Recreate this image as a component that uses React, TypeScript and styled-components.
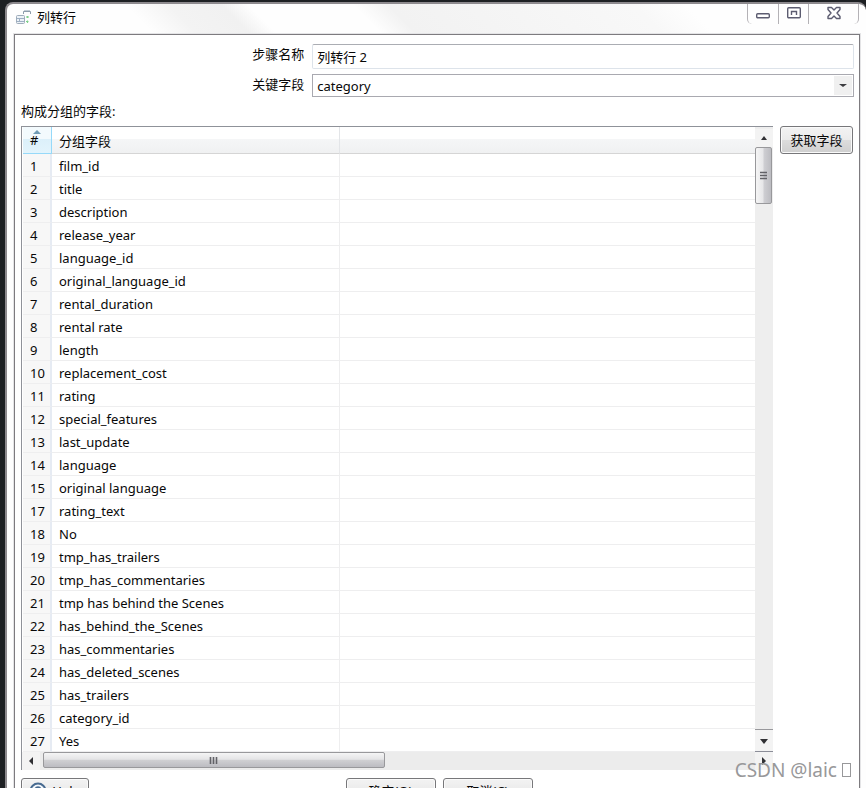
import React from "react";
import styled, { createGlobalStyle } from "styled-components";

const GlobalStyle = createGlobalStyle`
  * { box-sizing: border-box; }
  html, body, #root { height: 100%; }
  body {
    margin: 0;
    overflow: hidden;
    background: #1d2023;
    color: #080808;
    font: 13px/18px "Noto Sans", "Noto Sans CJK SC", sans-serif;
  }
  button, input, select { font: inherit; color: inherit; margin: 0; }
`;

const Desktop = styled.div`
  position: relative;
  height: 100%;
  padding: 2px 0 0 5px;
  overflow: hidden;
`;

const WindowFrame = styled.section`
  height: 100%;
  min-height: 0;
  display: flex;
  flex-direction: column;
  padding: 0 6px 0 7px;
  overflow: hidden;
  border: 2px solid #8d8a8e;
  border-right: 0;
  border-bottom: 0;
  border-radius: 8px 8px 0 0;
  background: #fefefe;
`;

const TitleBar = styled.header`
  flex: none;
  height: 30px;
  display: flex;
  align-items: flex-start;
  justify-content: space-between;
  background: linear-gradient(
    45deg,
    #fefefe 16%,
    #f3f3f3 21%,
    #f1f1f1 27%,
    #fefefe 30%,
    #fefefe 42%,
    #f2f2f2 46%,
    #f8f8f8 74%,
    #fefefe 80%
  );
`;

const Title = styled.h1`
  display: flex;
  align-items: center;
  gap: 5px;
  margin: 4px 0 0 2px;
  font-size: 13px;
  font-weight: 400;
  line-height: 18px;
`;

const WindowControls = styled.div`
  display: flex;
  height: 20px;
  margin-right: 1px;
  border: 1px solid #b4b2b6;
  border-top: 0;
  border-bottom: 0;
  border-radius: 0 0 5px 5px;
`;

const WindowButton = styled.button<{ $wide?: boolean }>`
  width: ${(p) => (p.$wide ? 50 : 30)}px;
  padding: 0;
  display: flex;
  justify-content: center;
  align-items: flex-start;
  border: 0;
  background: transparent;
  & + & { border-left: 1px solid #b4b2b6; }
`;

const Content = styled.main`
  flex: 1 0 auto;
  padding: 9px 5px 10px 6px;
  border: 1px solid #7d7b7f;
  outline: 1px solid #e4e4e6;
  background: #fff;
`;

const Form = styled.div`
  display: grid;
  grid-template-columns: 34% 1fr;
  column-gap: 8px;
  row-gap: 5px;
`;

const FieldLabel = styled.label`
  text-align: right;
  line-height: 20px;
`;

const TextField = styled.input`
  width: 100%;
  height: 25px;
  padding: 0 4px;
  border: 1px solid #dde3ea;
  border-top-color: #abadb3;
  border-radius: 2px;
  background: #fff;
`;

const SelectWrap = styled.div`
  position: relative;
`;

const SelectField = styled.select`
  display: block;
  width: 100%;
  height: 23px;
  padding: 0 22px 0 4px;
  appearance: none;
  border: 1px solid #a9a9b0;
  border-radius: 0;
  background: #fff;
`;

const SelectArrow = styled.span`
  position: absolute;
  top: 2px;
  right: 2px;
  bottom: 2px;
  width: 18px;
  display: flex;
  align-items: center;
  justify-content: center;
  background: #f0f0f0;
  pointer-events: none;
`;

const SectionLabel = styled.p`
  margin: 4px 0 5px;
  line-height: 20px;
`;

const GroupArea = styled.div`
  display: flex;
  align-items: flex-start;
  gap: 7px;
  padding-right: 1px;
`;

const ListBox = styled.div`
  flex: 1;
  min-width: 0;
  border-left: 1px solid #8f9299;
  border-top: 1px solid #8f9299;
`;

const ListBody = styled.div`
  display: flex;
`;

const FieldTable = styled.table`
  flex: 1;
  min-width: 0;
  margin-left: 1px;
  border-collapse: separate;
  border-spacing: 0;
  table-layout: fixed;
`;

const NumberColumn = styled.col`
  width: 29px;
`;

const NameColumn = styled.col`
  width: 288px;
`;

const HeadCell = styled.th<{ $sorted?: boolean }>`
  position: relative;
  height: 27px;
  padding: ${(p) => (p.$sorted ? "0 0 0 7px" : "1px 0 0 7px")};
  text-align: left;
  font-weight: 400;
  border-right: 1px solid ${(p) => (p.$sorted ? "#96d9f9" : "#e3e5e8")};
  border-bottom: 1px solid ${(p) => (p.$sorted ? "#96d9f9" : "#d5d5d5")};
  background: ${(p) =>
    p.$sorted
      ? "linear-gradient(#f3fafd 45%, #dcf0fa 46%, #e3f4fc)"
      : "linear-gradient(#ffffff 45%, #f5f6f7 46%, #f0f1f2)"};
  &:last-child { border-right: 0; }
`;

const SortMark = styled.svg`
  position: absolute;
  top: 3px;
  left: 10px;
`;

const NumberCell = styled.td`
  height: 23px;
  padding: 1px 0 0 7px;
  line-height: 20px;
  border-right: 2px solid #e6ebf3;
  border-bottom: 1px solid #eeeeef;
  background: #f7f7f7;
`;

const Cell = styled.td`
  height: 23px;
  padding: 1px 0 0 7px;
  line-height: 20px;
  white-space: nowrap;
  border-right: 1px solid #eeeeef;
  border-bottom: 1px solid #eeeeef;
  &:last-child { border-right: 0; }
`;

const VerticalBar = styled.div`
  width: 18px;
  padding: 2px 0 0;
  display: flex;
  flex-direction: column;
  border-bottom: 1px solid #8b8d98;
  background: #eeeeee;
`;

const HorizontalBar = styled.div`
  height: 18px;
  display: flex;
  background: #ececec;
`;

const ArrowButton = styled.button<{ $ruled?: boolean }>`
  flex: none;
  width: 18px;
  height: ${(p) => (p.$ruled ? 22 : 18)}px;
  padding: 0;
  display: flex;
  align-items: center;
  justify-content: center;
  border: 0;
  border-top: ${(p) => (p.$ruled ? "1px solid #98989c" : "0")};
  background: #f3f3f3;
`;

const Track = styled.div<{ $vertical?: boolean }>`
  flex: 1;
  display: flex;
  flex-direction: ${(p) => (p.$vertical ? "column" : "row")};
  padding-left: ${(p) => (p.$vertical ? 0 : 3)}px;
`;

const Thumb = styled.div<{ $vertical?: boolean }>`
  width: ${(p) => (p.$vertical ? "17px" : "48%")};
  height: ${(p) => (p.$vertical ? "57px" : "16px")};
  display: flex;
  align-items: center;
  justify-content: center;
  border: 1px solid #98989b;
  border-radius: 2px;
  background: ${(p) =>
    p.$vertical
      ? "linear-gradient(90deg, #f5f5f5, #e6e6e8 48%, #cfcfd3 52%, #bcbcc1)"
      : "linear-gradient(#f5f5f5, #e4e4e6 45%, #cfcfd2 52%, #bcbcc1)"};
`;

const PushButton = styled.button<{ $width: number }>`
  flex: none;
  width: ${(p) => p.$width}px;
  height: 28px;
  padding: 0;
  display: flex;
  align-items: center;
  justify-content: center;
  gap: 5px;
  white-space: nowrap;
  border: 1px solid #77777a;
  border-radius: 3px;
  box-shadow: inset 0 0 0 1px #fafafa;
  background: linear-gradient(#f3f3f3, #ebebeb 48%, #dddddd 50%, #cfcfcf);
`;

const Footer = styled.footer`
  display: grid;
  grid-template-columns: 1fr auto 1fr;
  margin-top: 8px;
  padding-left: 3px;
  ${PushButton} { height: 25px; }
`;

const HelpSlot = styled.div`
  margin-left: -3px;
`;

const Confirm = styled.div`
  display: flex;
  gap: 7px;
`;

const Watermark = styled.div`
  position: absolute;
  right: 15px;
  bottom: 5px;
  display: flex;
  align-items: center;
  gap: 5px;
  color: #98989a;
  font-size: 19px;
  line-height: 26px;
`;

const MissingGlyph = styled.span`
  width: 9px;
  height: 14px;
  border: 1px solid #98989a;
`;

const rows: [number, string][] = [
  [1, "film_id"],
  [2, "title"],
  [3, "description"],
  [4, "release_year"],
  [5, "language_id"],
  [6, "original_language_id"],
  [7, "rental_duration"],
  [8, "rental rate"],
  [9, "length"],
  [10, "replacement_cost"],
  [11, "rating"],
  [12, "special_features"],
  [13, "last_update"],
  [14, "language"],
  [15, "original language"],
  [17, "rating_text"],
  [18, "No"],
  [19, "tmp_has_trailers"],
  [20, "tmp_has_commentaries"],
  [21, "tmp has behind the Scenes"],
  [22, "has_behind_the_Scenes"],
  [23, "has_commentaries"],
  [24, "has_deleted_scenes"],
  [25, "has_trailers"],
  [26, "category_id"],
  [27, "Yes"],
];

const arrowPaths = {
  up: "M1 6 L4 2 L7 6 Z",
  down: "M0 2 H8 L4 7 Z",
  left: "M6 0 V8 L2 4 Z",
  right: "M2 0 V8 L6 4 Z",
};

function Arrow({ direction }: { direction: keyof typeof arrowPaths }) {
  return (
    <svg width="8" height="8" viewBox="0 0 8 8" aria-hidden="true">
      <path d={arrowPaths[direction]} fill="#303034" />
    </svg>
  );
}

function Grip({ vertical }: { vertical?: boolean }) {
  return (
    <svg width="9" height="9" viewBox="0 0 9 9" aria-hidden="true">
      <path
        d={vertical ? "M1 1.5H8M1 4.5H8M1 7.5H8" : "M1.5 1V8M4.5 1V8M7.5 1V8"}
        stroke="#626267"
        strokeWidth="1.6"
      />
    </svg>
  );
}

function StepIcon() {
  return (
    <svg width="16" height="16" viewBox="0 0 16 16" fill="none" aria-hidden="true">
      <path d="M7.5 5V2.5H14.5V5" stroke="#8d9cab" />
      <path d="M8 1.5H14" stroke="#c3cdd6" />
      <rect x="0.5" y="6.5" width="8" height="8" rx="1" fill="#edf2f7" stroke="#9eacba" />
      <path d="M1 9.5H8M1 12.5H8M3.5 9.5V12.5" stroke="#9eb0c4" />
      <path d="M11.5 7V9M10 8H13M11.5 11.5V14M10 12.5H12.5" stroke="#7fd08a" strokeWidth="1.2" />
    </svg>
  );
}

function HelpIcon() {
  return (
    <svg width="18" height="18" viewBox="0 0 18 18" fill="none" aria-hidden="true">
      <circle cx="9" cy="9" r="7.5" fill="#f3f7fb" stroke="#476a90" strokeWidth="2" />
      <path d="M6.5 7.2C6.5 4.4 11.5 4.4 11.5 7.2C11.5 9 9 9 9 11M9 12.4V14" stroke="#476a90" strokeWidth="1.6" />
    </svg>
  );
}

export default function App() {
  return (
    <Desktop>
      <GlobalStyle />
      <WindowFrame>
        <TitleBar>
          <Title>
            <StepIcon />
            列转行
          </Title>
          <WindowControls>
            <WindowButton aria-label="最小化">
              <svg width="16" height="20" viewBox="0 0 16 20" fill="none">
                <rect x="1.7" y="9.7" width="12.6" height="4" rx="1" fill="#fff" stroke="#5c5c70" strokeWidth="1.4" />
              </svg>
            </WindowButton>
            <WindowButton aria-label="最大化">
              <svg width="16" height="20" viewBox="0 0 16 20" fill="none">
                <rect x="1.7" y="3.7" width="12.6" height="10" rx="1" fill="#fff" stroke="#5c5c70" strokeWidth="1.4" />
                <path d="M5.5 11V7.5H10.5V11" stroke="#5c5c70" strokeWidth="1.4" />
              </svg>
            </WindowButton>
            <WindowButton aria-label="关闭" $wide>
              <svg width="16" height="20" viewBox="0 0 16 20" fill="none">
                <path
                  d="M2 3.5H5.5L8 6L10.5 3.5H14V5.5L11 9L14 12.5V14.5H10.5L8 12L5.5 14.5H2V12.5L5 9L2 5.5Z"
                  fill="#fff"
                  stroke="#5c5c70"
                  strokeWidth="1.4"
                  strokeLinejoin="round"
                />
              </svg>
            </WindowButton>
          </WindowControls>
        </TitleBar>
        <Content>
          <Form>
            <FieldLabel htmlFor="step-name">步骤名称</FieldLabel>
            <TextField id="step-name" defaultValue="列转行 2" />
            <FieldLabel htmlFor="key-field">关键字段</FieldLabel>
            <SelectWrap>
              <SelectField id="key-field" defaultValue="category">
                <option>category</option>
              </SelectField>
              <SelectArrow>
                <svg width="8" height="5" viewBox="0 0 8 5" aria-hidden="true">
                  <path d="M0 1H8L4 4Z" fill="#3c3c40" />
                </svg>
              </SelectArrow>
            </SelectWrap>
          </Form>
          <SectionLabel id="group-fields">构成分组的字段:</SectionLabel>
          <GroupArea>
            <ListBox>
              <ListBody>
                <FieldTable aria-labelledby="group-fields">
                  <colgroup>
                    <NumberColumn />
                    <NameColumn />
                    <col />
                  </colgroup>
                  <thead>
                    <tr>
                      <HeadCell $sorted>
                        <SortMark width="8" height="4" viewBox="0 0 8 4" aria-hidden="true">
                          <path d="M0 4L4 0L8 4Z" fill="#6f9bb5" />
                        </SortMark>
                        #
                      </HeadCell>
                      <HeadCell>分组字段</HeadCell>
                      <HeadCell aria-label="空列" />
                    </tr>
                  </thead>
                  <tbody>
                    {rows.map(([number, name]) => (
                      <tr key={number}>
                        <NumberCell>{number}</NumberCell>
                        <Cell>{name}</Cell>
                        <Cell />
                      </tr>
                    ))}
                  </tbody>
                </FieldTable>
                <VerticalBar>
                  <ArrowButton aria-label="向上滚动">
                    <Arrow direction="up" />
                  </ArrowButton>
                  <Track $vertical>
                    <Thumb $vertical>
                      <Grip vertical />
                    </Thumb>
                  </Track>
                  <ArrowButton aria-label="向下滚动" $ruled>
                    <Arrow direction="down" />
                  </ArrowButton>
                </VerticalBar>
              </ListBody>
              <HorizontalBar>
                <ArrowButton aria-label="向左滚动">
                  <Arrow direction="left" />
                </ArrowButton>
                <Track>
                  <Thumb>
                    <Grip />
                  </Thumb>
                </Track>
                <ArrowButton aria-label="向右滚动">
                  <Arrow direction="right" />
                </ArrowButton>
              </HorizontalBar>
            </ListBox>
            <PushButton $width={73}>获取字段</PushButton>
          </GroupArea>
          <Footer>
            <HelpSlot>
              <PushButton $width={68}>
                <HelpIcon />
                Help
              </PushButton>
            </HelpSlot>
            <Confirm>
              <PushButton $width={90}>确定(O)</PushButton>
              <PushButton $width={90}>取消(C)</PushButton>
            </Confirm>
          </Footer>
        </Content>
      </WindowFrame>
      <Watermark>
        CSDN @laic
        <MissingGlyph />
      </Watermark>
    </Desktop>
  );
}
